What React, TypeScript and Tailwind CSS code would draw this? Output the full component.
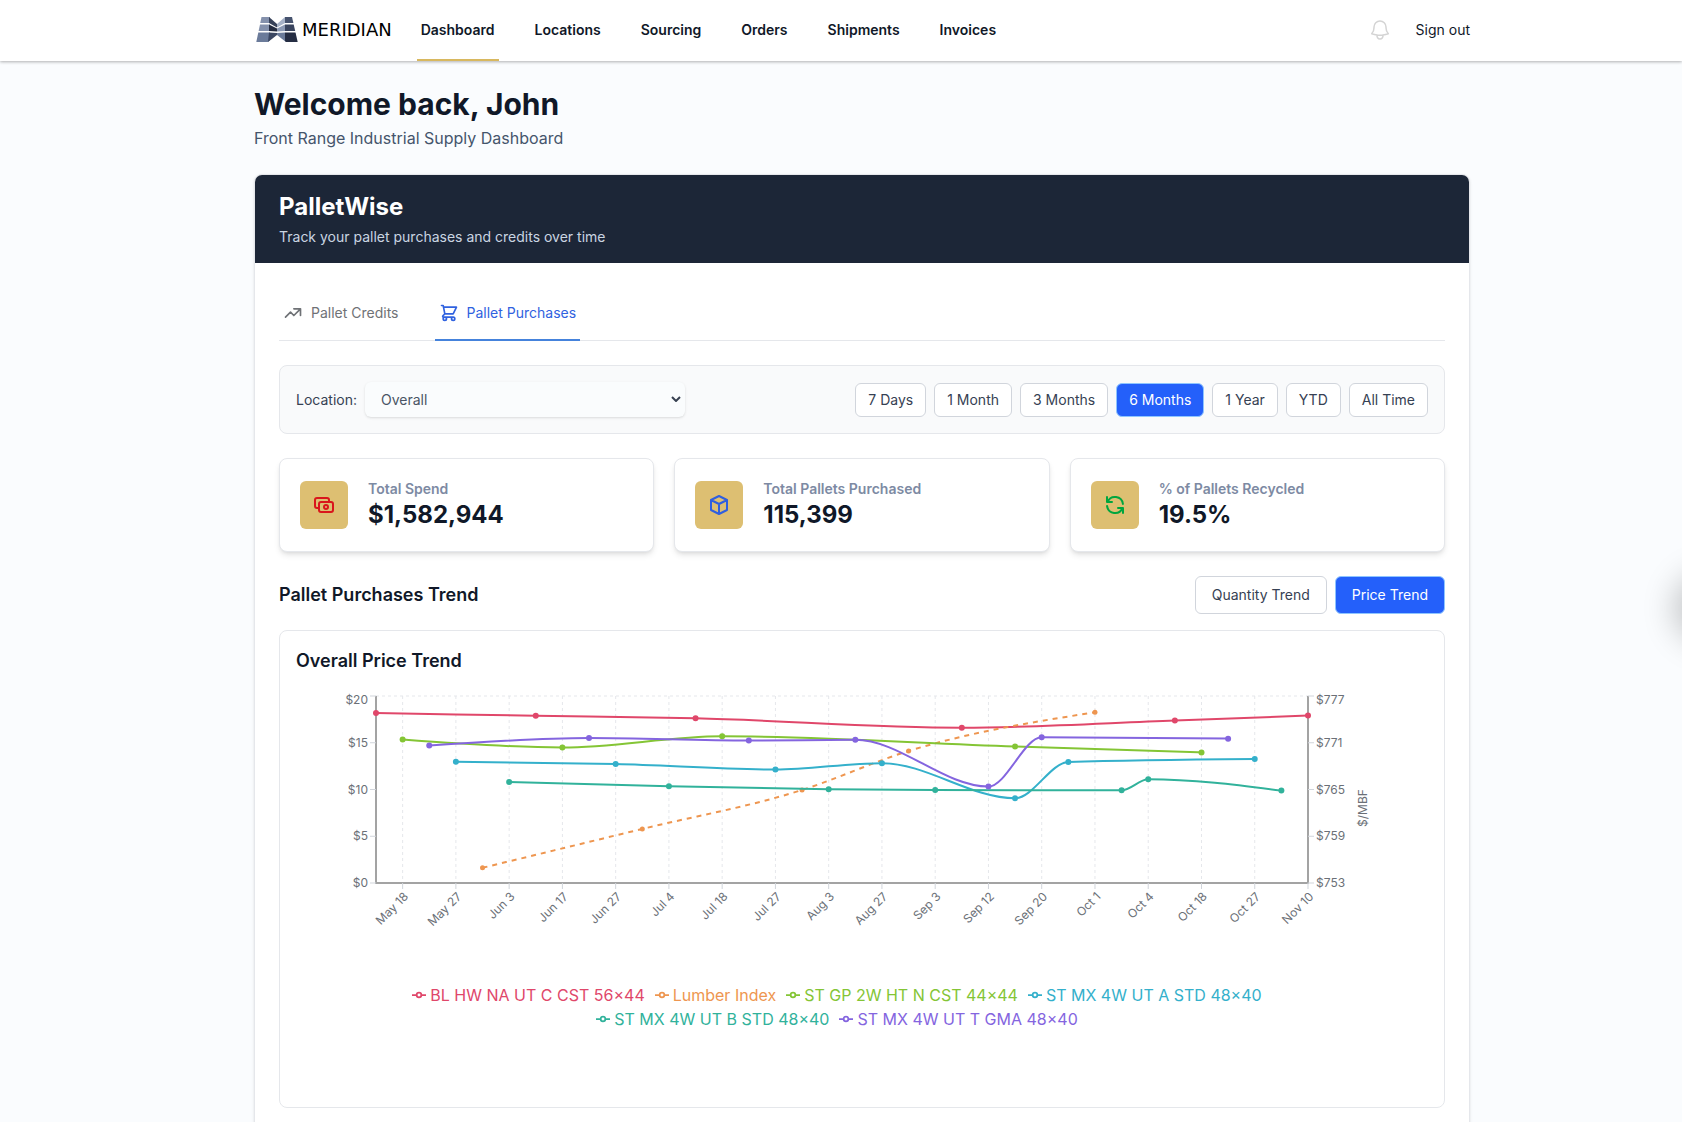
import { useState } from 'react';
import {
  HiOutlineCash,
  HiOutlineCube,
  HiOutlineRefresh,
  HiOutlineShoppingCart,
  HiOutlineTrendingUp,
} from 'react-icons/hi';
import { HiOutlineBell } from 'react-icons/hi2';

const navItems = ['Dashboard', 'Locations', 'Sourcing', 'Orders', 'Shipments', 'Invoices'];

const tabs = [
  { label: 'Pallet Credits',   icon: HiOutlineTrendingUp },
  { label: 'Pallet Purchases', icon: HiOutlineShoppingCart },
];

const ranges = ['7 Days', '1 Month', '3 Months', '6 Months', '1 Year', 'YTD', 'All Time'];

const stats = [
  { label: 'Total Spend',             value: '$1,582,944', icon: HiOutlineCash,    color: 'text-[#d9161c]' },
  { label: 'Total Pallets Purchased', value: '115,399',    icon: HiOutlineCube,    color: 'text-[#2f5fe0]' },
  { label: '% of Pallets Recycled',   value: '19.5%',      icon: HiOutlineRefresh, color: 'text-green-600' },
];

// points are [slot on the date axis, price]
type Series = { name: string; color: string; index?: boolean; points: [number, number][] };

const series: Series[] = [
  { name: 'BL HW NA UT C CST 56×44', color: '#e0476a',
    points: [[0, 18.17], [6, 17.89], [12, 17.61], [22, 16.61], [30, 17.37], [35, 17.91]] },
  { name: 'Lumber Index', color: '#ee9650', index: true,
    points: [[4, 754.95], [10, 759.94], [16, 764.94], [20, 769.94], [27, 774.91]] },
  { name: 'ST GP 2W HT N CST 44×44', color: '#84c535',
    points: [[1, 15.34], [7, 14.49], [13, 15.69], [24, 14.6], [31, 13.96]] },
  { name: 'ST MX 4W UT A STD 48×40', color: '#34b0cb',
    points: [[3, 12.98], [9, 12.72], [15, 12.14], [19, 12.82], [24, 9.06], [26, 12.94], [33, 13.26]] },
  { name: 'ST MX 4W UT B STD 48×40', color: '#31b29b',
    points: [[5, 10.79], [11, 10.34], [17, 10.02], [21, 9.94], [28, 9.91], [29, 11.09], [34, 9.88]] },
  { name: 'ST MX 4W UT T GMA 48×40', color: '#8465df',
    points: [[2, 14.7], [8, 15.5], [14, 15.24], [18, 15.32], [23, 10.31], [25, 15.58], [32, 15.44]] },
];

const dates = [
  'May 18', 'May 27', 'Jun 3', 'Jun 17', 'Jun 27', 'Jul 4', 'Jul 18', 'Jul 27', 'Aug 3',
  'Aug 27', 'Sep 3', 'Sep 12', 'Sep 20', 'Oct 1', 'Oct 4', 'Oct 18', 'Oct 27', 'Nov 10',
];

const LEFT = 80;
const RIGHT = 1012;
const TOP = 5;
const BOTTOM = 192;

const xAt = (slot: number) => LEFT + ((RIGHT - LEFT) * slot) / 35;
const yAt = (price: number, index?: boolean) =>
  BOTTOM - (BOTTOM - TOP) * (index ? (price - 753) / 24 : price / 20);

// monotone cubic through the points
function linePath(pts: [number, number][]) {
  const n = pts.length;
  const slope = pts.slice(1).map((p, i) => (p[1] - pts[i][1]) / (p[0] - pts[i][0]));
  const t: number[] = new Array(n).fill(0);
  for (let i = 1; i < n - 1; i++) {
    const h0 = pts[i][0] - pts[i - 1][0];
    const h1 = pts[i + 1][0] - pts[i][0];
    const [s0, s1] = [slope[i - 1], slope[i]];
    const p = (s0 * h1 + s1 * h0) / (h0 + h1);
    t[i] = (Math.sign(s0) + Math.sign(s1)) * Math.min(Math.abs(s0), Math.abs(s1), 0.5 * Math.abs(p));
  }
  t[0] = (3 * slope[0] - t[1]) / 2;
  t[n - 1] = (3 * slope[n - 2] - t[n - 2]) / 2;

  let d = `M${pts[0][0]},${pts[0][1]}`;
  for (let i = 1; i < n; i++) {
    const [x0, y0] = pts[i - 1];
    const [x1, y1] = pts[i];
    const dx = (x1 - x0) / 3;
    d += `C${x0 + dx},${y0 + dx * t[i - 1]} ${x1 - dx},${y1 - dx * t[i]} ${x1},${y1}`;
  }
  return d;
}

function Logo() {
  return (
    <a href="#" className="flex items-center gap-1 pb-0.5 pl-0.5 text-black">
      <svg viewBox="0 0 42 26" className="w-[42px] h-[26px]" aria-hidden="true">
        <path d="M5.500 0H14V6H4.200Z" fill="#8491ac" />
        <path d="M4 7.500H14V14H2.600Z" fill="#8491ac" />
        <path d="M2.300 15.500H14V23L12 25H0.300Z" fill="#6b7b9a" />
        <path d="M13 0L21 7V10.500L13 6Z" fill="#364159" />
        <path d="M13 7.500L21 11.500V14.500L13 14Z" fill="#232b40" />
        <path d="M13 15.500L21 16V18L12 25Z" fill="#3b4762" />
        <path d="M29 0L21 7V10.500L29 6Z" fill="#a5b1c7" />
        <path d="M29 7.500L21 11.500V14.500L29 14Z" fill="#8b99b4" />
        <path d="M29 15.500L21 16V18L30 25Z" fill="#6b7b9a" />
        <path d="M29 0H36L37.400 6H29Z" fill="#47536e" />
        <path d="M29 7.500H37.700L39.200 14H29Z" fill="#39445e" />
        <path d="M29 15.500H39.500L41.700 25H30L29 24Z" fill="#252d43" />
      </svg>
      <span className="font-['DejaVu_Sans',sans-serif] text-lg leading-6">MERIDIAN</span>
    </a>
  );
}

function PriceChart() {
  return (
    <svg viewBox="0 0 1132 292" className="block w-full" role="img" aria-label="Overall Price Trend">
      <g stroke="#e5e7eb" strokeDasharray="3 3">
        <line x1={LEFT} y1={TOP} x2={RIGHT} y2={TOP} />
        {dates.slice(0, -1).map((d, i) => (
          <line key={d} x1={xAt(2 * i + 1)} y1={TOP} x2={xAt(2 * i + 1)} y2={BOTTOM} />
        ))}
      </g>

      {/* axes */}
      <path d={`M${LEFT} ${TOP}V${BOTTOM}H${RIGHT}V${TOP}`} fill="none" stroke="#a3a3a3" strokeWidth="2" />
      <g fontSize="12" fill="#6b7077">
        {[0, 5, 10, 15, 20].map((v) => {
          const y = yAt(v);
          const textY = v === 20 ? y + 8 : y + 4;
          return (
            <g key={v}>
              <path d={`M${LEFT - 6} ${y}H${LEFT}M${RIGHT} ${y}H${RIGHT + 6}`} stroke="#d1d5db" />
              <text x={LEFT - 8} y={textY} textAnchor="end">${v}</text>
              <text x={RIGHT + 8} y={textY}>${753 + (v / 5) * 6}</text>
            </g>
          );
        })}
        {dates.map((d, i) => {
          const x = xAt(2 * i + 1);
          return (
            <g key={d}>
              <path d={`M${x} ${BOTTOM}v6`} stroke="#d1d5db" />
              <text x={x} y={BOTTOM + 8} dy="9" textAnchor="end" transform={`rotate(-45 ${x} ${BOTTOM + 8})`}>{d}</text>
            </g>
          );
        })}
        <text x="1071" y="117" textAnchor="middle" transform="rotate(-90 1071 117)">$/MBF</text>
      </g>

      {series.map((s) => {
        const pts = s.points.map(([x, v]): [number, number] => [xAt(x), yAt(v, s.index)]);
        return (
          <g key={s.name}>
            <path d={linePath(pts)} fill="none" stroke={s.color} strokeWidth="2" strokeDasharray={s.index ? '5 5' : undefined} />
            {pts.map(([x, y]) => <circle key={x} cx={x} cy={y} r={s.index ? 2.5 : 3} fill={s.color} />)}
          </g>
        );
      })}
    </svg>
  );
}

export default function App() {
  const [page, setPage] = useState('Dashboard');
  const [tab, setTab] = useState('Pallet Purchases');
  const [range, setRange] = useState('6 Months');
  const [trend, setTrend] = useState('Price Trend');

  return (
    <div className="relative min-h-screen overflow-x-clip bg-[#fafcfe] font-['Inter',sans-serif] text-gray-900">

      {/* Header */}
      <header className="bg-white pl-[42px] shadow-[0_1px_3px_rgba(0,0,0,0.3)]">
        <div className="mx-auto flex h-[61px] max-w-[1216px] items-center">
          <Logo />
          <nav className="ml-[25px] flex h-full gap-8">
            {navItems.map((item) => (
              <a
                key={item}
                href="#"
                onClick={() => setPage(item)}
                className={`flex items-center border-b-2 px-1 text-sm font-semibold ${
                  page === item ? 'border-[#d8b85f]' : 'border-transparent'
                }`}
              >
                {item}
              </a>
            ))}
          </nav>
          <div className="ml-auto flex items-center gap-6 pb-0.5">
            <button aria-label="Notifications" className="text-neutral-300">
              <HiOutlineBell className="size-6" />
            </button>
            <button className="text-sm">Sign out</button>
          </div>
        </div>
      </header>

      <main className="pl-[42px]">
        <div className="mx-auto max-w-[1216px] pt-[25px] pb-6">
          <h1 className="text-3xl font-bold text-gray-900">Welcome back, John</h1>
          <p className="mt-1 text-base text-slate-600">Front Range Industrial Supply Dashboard</p>

          <section className="mt-6 overflow-hidden rounded-lg border border-gray-200 bg-white shadow-sm">
            <div className="bg-[#1c2637] px-6 py-4">
              <h2 className="text-2xl font-bold text-white">PalletWise</h2>
              <p className="mt-1 text-sm text-slate-300">Track your pallet purchases and credits over time</p>
            </div>

            <div className="p-6">
              {/* Tabs */}
              <div className="flex gap-8 border-b border-gray-200">
                {tabs.map(({ label, icon: Icon }) => (
                  <button
                    key={label}
                    onClick={() => setTab(label)}
                    className={`-mb-px flex items-center gap-2 border-b-2 px-1 py-4 text-sm ${
                      tab === label ? 'border-[#4583dc] text-[#3062e0]' : 'border-transparent text-[#6f7276]'
                    }`}
                  >
                    <Icon className="size-5" />
                    {label}
                  </button>
                ))}
              </div>

              {/* Filters */}
              <div className="mt-6 flex items-center justify-between rounded-lg border border-gray-200 bg-gray-50 p-4">
                <div className="flex items-center gap-2">
                  <label htmlFor="location" className="text-sm text-gray-700">Location:</label>
                  <div className="relative">
                    <select
                      id="location"
                      className="block h-[35px] w-80 appearance-none rounded-md bg-[#fafcfd] px-4 text-sm text-gray-600 shadow-sm"
                    >
                      <option>Overall</option>
                    </select>
                    <svg viewBox="0 0 10 6" className="pointer-events-none absolute right-1 top-3.5 h-1.5 w-2.5" fill="none" stroke="#374151" strokeWidth="2">
                      <path d="M1 1L5 5L9 1" />
                    </svg>
                  </div>
                </div>
                <div className="flex gap-2">
                  {ranges.map((r) => (
                    <button
                      key={r}
                      onClick={() => setRange(r)}
                      className={`rounded-md border px-3 py-1.5 text-sm ${
                        range === r ? 'border-blue-300 bg-[#2460fa] text-white' : 'border-gray-300 bg-white text-gray-700'
                      }`}
                    >
                      {r}
                    </button>
                  ))}
                </div>
              </div>

              {/* Stats */}
              <div className="mt-6 grid grid-cols-3 gap-5">
                {stats.map(({ label, value, icon: Icon, color }) => (
                  <div key={label} className="flex items-center gap-5 rounded-lg border border-gray-200 bg-white p-5 shadow-md">
                    <div className="flex size-12 items-center justify-center rounded-md bg-[#ddbf72]">
                      <Icon className={`size-6 ${color}`} />
                    </div>
                    <div>
                      <p className="text-sm font-semibold text-[#7d8aa3]">{label}</p>
                      <p className="text-2xl font-bold">{value}</p>
                    </div>
                  </div>
                ))}
              </div>

              {/* Trend */}
              <div className="mt-6 flex items-center justify-between">
                <h3 className="text-lg font-semibold">Pallet Purchases Trend</h3>
                <div className="flex gap-2">
                  {['Quantity Trend', 'Price Trend'].map((t) => (
                    <button
                      key={t}
                      onClick={() => setTrend(t)}
                      className={`rounded-md border px-4 py-2 text-sm ${
                        trend === t ? 'border-blue-300 bg-[#2460fa] text-white' : 'border-gray-300 bg-white text-gray-700'
                      }`}
                    >
                      {t}
                    </button>
                  ))}
                </div>
              </div>

              <div className="mt-4 rounded-lg border border-gray-200 px-4 pt-4 pb-[76px]">
                <h4 className="mb-4 text-lg font-semibold">Overall Price Trend</h4>
                <PriceChart />
                <ul className="flex flex-wrap justify-center pr-[120px] pl-20">
                  {series.map((s) => (
                    <li key={s.name} className="mr-2.5 flex items-center gap-1" style={{ color: s.color }}>
                      <svg viewBox="0 0 32 32" className="size-3.5" fill="none" stroke="currentColor" strokeWidth="4">
                        <path d="M0,16h10.667A5.333,5.333,0,1,1,21.333,16H32M21.333,16A5.333,5.333,0,1,1,10.667,16" />
                      </svg>
                      {s.name}
                    </li>
                  ))}
                </ul>
              </div>
            </div>
          </section>
        </div>
      </main>

      <div className="absolute -right-14 top-[580px] size-14 rounded-full shadow-[0_0_32px_8px_rgba(0,0,0,0.22)]" />
    </div>
  );
}
